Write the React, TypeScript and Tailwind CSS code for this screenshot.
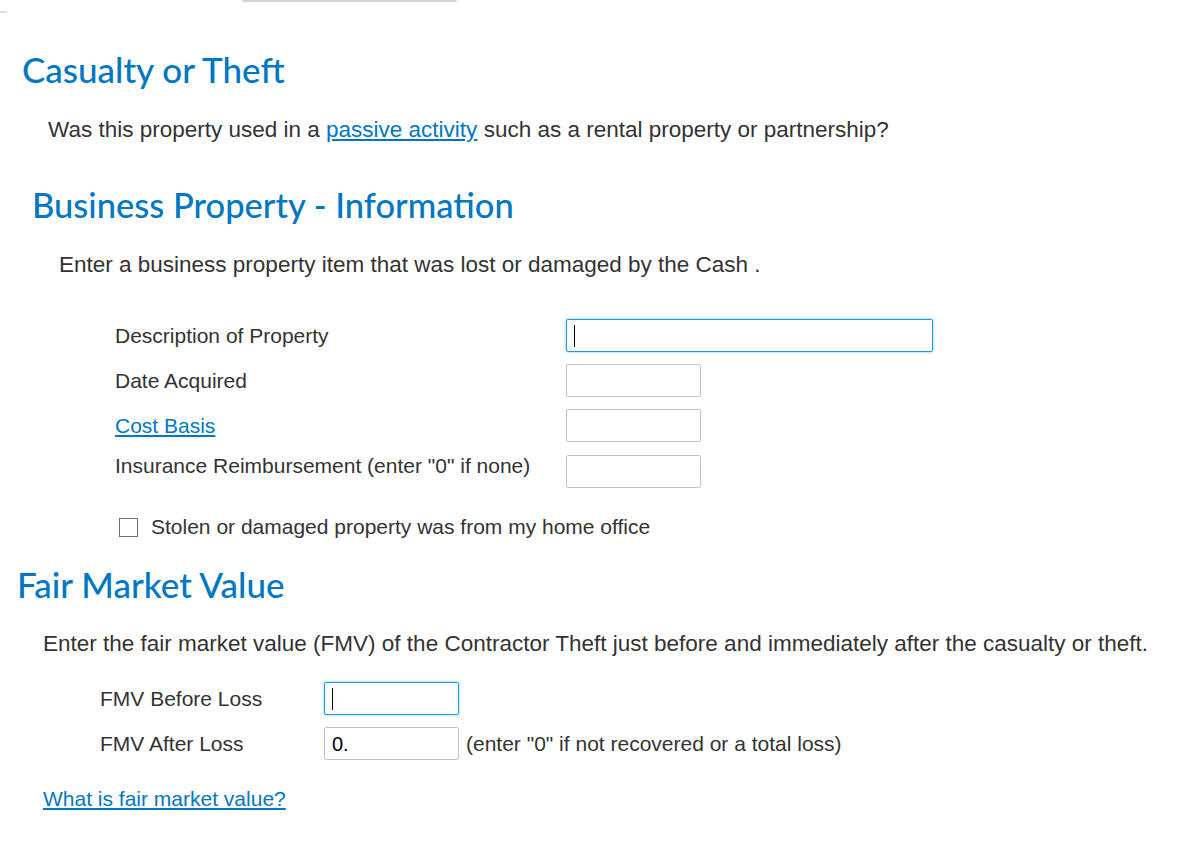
import React from "react";

const H = "font-['Lato','Open_Sans',sans-serif] text-[#0077c5] font-medium";
const B = "font-['Liberation_Sans',Arial,sans-serif] text-[#333333]";

function Field({ w, focus, value }: { w: string; focus?: boolean; value?: string }) {
  return (
    <div
      className={`${w} h-[33px] rounded-[2px] border bg-white flex items-center px-[7px] ${
        focus ? "border-[#1a9de0] shadow-[0_0_3px_rgba(26,157,224,0.6)]" : "border-[#c4c4c4]"
      }`}
    >
      {focus ? <span className="w-px h-[22px] bg-black" /> : null}
      {value ? <span className={`${B} text-[20px] !text-black`}>{value}</span> : null}
    </div>
  );
}

export default function App() {
  return (
    <div className="w-[1188px] h-[867px] bg-white relative overflow-hidden">
      <div className="h-[12px] flex">
        <div className="w-[7px] h-[2px] mt-[11px] bg-[#dcdcdc]" />
        <div className="ml-[235px] w-[215px] h-[2px] bg-[#d4d4d4] rounded-b-full" />
      </div>

      <h1 className={`${H} text-[35px] leading-[40px] ml-[22px] mt-[37px]`}>Casualty or Theft</h1>
      <p className={`${B} text-[22.5px] leading-[26px] ml-[48px] mt-[28px]`}>
        Was this property used in a{" "}
        <a className="text-[#0077c5] underline">passive activity</a> such as a rental property or partnership?
      </p>

      <h2 className={`${H} text-[34.5px] leading-[40px] ml-[32px] mt-[42px]`}>Business Property - Information</h2>
      <p className={`${B} text-[22.5px] leading-[26px] ml-[59px] mt-[27px]`}>
        Enter a business property item that was lost or damaged by the Cash .
      </p>

      <div className="ml-[115px] mt-[41px] grid grid-cols-[451px_auto] gap-y-[12px] items-center">
        <span className={`${B} text-[21px] leading-[24px]`}>Description of Property</span>
        <Field w="w-[367px]" focus />
        <span className={`${B} text-[21px] leading-[24px]`}>Date Acquired</span>
        <Field w="w-[135px]" />
        <a className={`${B} text-[21px] leading-[24px] !text-[#0077c5] underline`}>Cost Basis</a>
        <Field w="w-[135px]" />
        <span className={`${B} text-[21px] leading-[24px] mb-[10px]`}>Insurance Reimbursement (enter "0" if none)</span>
        <Field w="w-[135px]" />
      </div>

      <label className="ml-[119px] mt-[27px] flex items-center gap-[13px]">
        <span className="w-[19px] h-[19px] border border-[#707070] bg-white" />
        <span className={`${B} text-[21px] leading-[24px]`}>Stolen or damaged property was from my home office</span>
      </label>

      <h2 className={`${H} text-[35px] leading-[40px] ml-[17px] mt-[25px]`}>Fair Market Value</h2>
      <p className={`${B} text-[22.5px] leading-[26px] ml-[43px] mt-[27px]`}>
        Enter the fair market value (FMV) of the Contractor Theft just before and immediately after the casualty or theft.
      </p>

      <div className="ml-[100px] mt-[25px] grid grid-cols-[224px_auto_auto] gap-y-[12px] items-center justify-start">
        <span className={`${B} text-[21px] leading-[24px]`}>FMV Before Loss</span>
        <Field w="w-[135px]" focus />
        <span />
        <span className={`${B} text-[21px] leading-[24px]`}>FMV After Loss</span>
        <Field w="w-[135px]" value="0." />
        <span className={`${B} text-[21px] leading-[24px] ml-[7px]`}>(enter "0" if not recovered or a total loss)</span>
      </div>

      <a className={`${B} block w-fit text-[21px] leading-[24px] !text-[#0077c5] underline ml-[43px] mt-[27px]`}>What is fair market value?</a>
    </div>
  );
}
